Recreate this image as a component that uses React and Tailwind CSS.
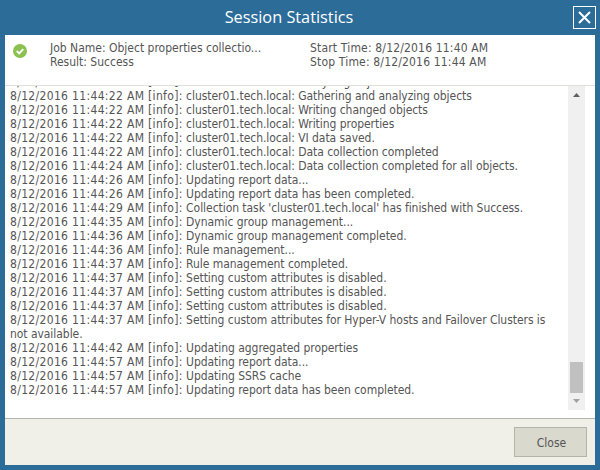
const lines = [
  ["11:44:22", "cluster01.tech.local: Analyzing objects"],
  ["11:44:22", "cluster01.tech.local: Gathering and analyzing objects"],
  ["11:44:22", "cluster01.tech.local: Writing changed objects"],
  ["11:44:22", "cluster01.tech.local: Writing properties"],
  ["11:44:22", "cluster01.tech.local: VI data saved."],
  ["11:44:22", "cluster01.tech.local: Data collection completed"],
  ["11:44:24", "cluster01.tech.local: Data collection completed for all objects."],
  ["11:44:26", "Updating report data..."],
  ["11:44:26", "Updating report data has been completed."],
  ["11:44:29", "Collection task 'cluster01.tech.local' has finished with Success."],
  ["11:44:35", "Dynamic group management..."],
  ["11:44:36", "Dynamic group management completed."],
  ["11:44:36", "Rule management..."],
  ["11:44:37", "Rule management completed."],
  ["11:44:37", "Setting custom attributes is disabled."],
  ["11:44:37", "Setting custom attributes is disabled."],
  ["11:44:37", "Setting custom attributes is disabled."],
  ["11:44:37", "Setting custom attributes for Hyper-V hosts and Failover Clusters is not available."],
  ["11:44:42", "Updating aggregated properties"],
  ["11:44:57", "Updating report data..."],
  ["11:44:57", "Updating SSRS cache"],
  ["11:44:57", "Updating report data has been completed."],
];

export default function App() {
  return (
    <div className="w-[600px] h-[470px] bg-[#2b6c99] flex flex-col px-[5px] pb-[5px] overflow-hidden font-['DejaVu_Sans_Condensed','DejaVu_Sans',sans-serif] text-[12px] leading-[14px] text-[#555555]">
      <div className="h-[35px] shrink-0 flex items-center relative pr-[22px] pb-[2px]">
        <div className="flex-1 text-center text-white text-[16.3px] font-['Open_Sans',sans-serif]">Session Statistics</div>
        <div className="absolute right-[-1px] top-[6px] w-[23px] h-[23px] border border-white flex items-center justify-center">
          <svg width="15" height="15" viewBox="0 0 15 15" stroke="white" strokeWidth="2" fill="none">
            <path d="M2 2 L13 13 M13 2 L2 13" />
          </svg>
        </div>
      </div>
      <div className="flex-1 min-h-0 flex flex-col bg-white">
        <div className="h-[51px] shrink-0 flex border-b border-[#e0e0d8] pl-[8px] pt-[6px]">
          <div className="w-[14px] h-[14px] mt-[3px] mr-[23px] shrink-0">
            <svg width="14" height="14" viewBox="0 0 15 15">
              <circle cx="7.5" cy="7.5" r="7.5" fill="#8cc152" />
              <path d="M4 7.5 L6.6 10 L11 5.4" stroke="white" strokeWidth="2" fill="none" />
            </svg>
          </div>
          <div className="w-[260px] shrink-0">
            <div>Job Name: Object properties collectio...</div>
            <div>Result: Success</div>
          </div>
          <div className="tracking-[0.17px]">
            <div>Start Time: 8/12/2016 11:40 AM</div>
            <div>Stop Time: 8/12/2016 11:44 AM</div>
          </div>
        </div>
        <div className="flex-1 min-h-0 flex pb-[8px] pr-[10px]">
          <div className="flex-1 min-w-0 overflow-hidden pl-[5px] pr-[14px]">
            <div className="mt-[-11px]">
              {lines.map(([t, l], i) => (
                <div key={i} className="tracking-[-0.05px]">
                  <span className="tracking-[0.33px]">8/12/2016 {t} AM [info]:</span> {l}
                </div>
              ))}
            </div>
          </div>
          <div className="w-[17px] shrink-0 bg-[#f0f0f0] flex flex-col items-center">
            <svg width="7" height="4" viewBox="0 0 7 4" className="mt-[7px] shrink-0">
              <path d="M0 4 L3.5 0 L7 4 Z" fill="#606060" />
            </svg>
            <div className="flex-1" />
            <div className="w-[13px] h-[31px] bg-[#c0c0c0]" />
            <svg width="7" height="4" viewBox="0 0 7 4" className="mt-[6px] mb-[7px] shrink-0">
              <path d="M0 0 L7 0 L3.5 4 Z" fill="#a0a0a0" />
            </svg>
          </div>
        </div>
        <div className="h-[47px] shrink-0 bg-[#f0f0e8] border-t border-[#b4b4a8] flex items-center justify-end pr-[8px]">
          <button className="w-[73px] h-[30px] bg-[#d9d9ce] border border-[#b4b4a8] text-[#555555] pl-[2px] pt-[1px]">Close</button>
        </div>
      </div>
    </div>
  );
}
